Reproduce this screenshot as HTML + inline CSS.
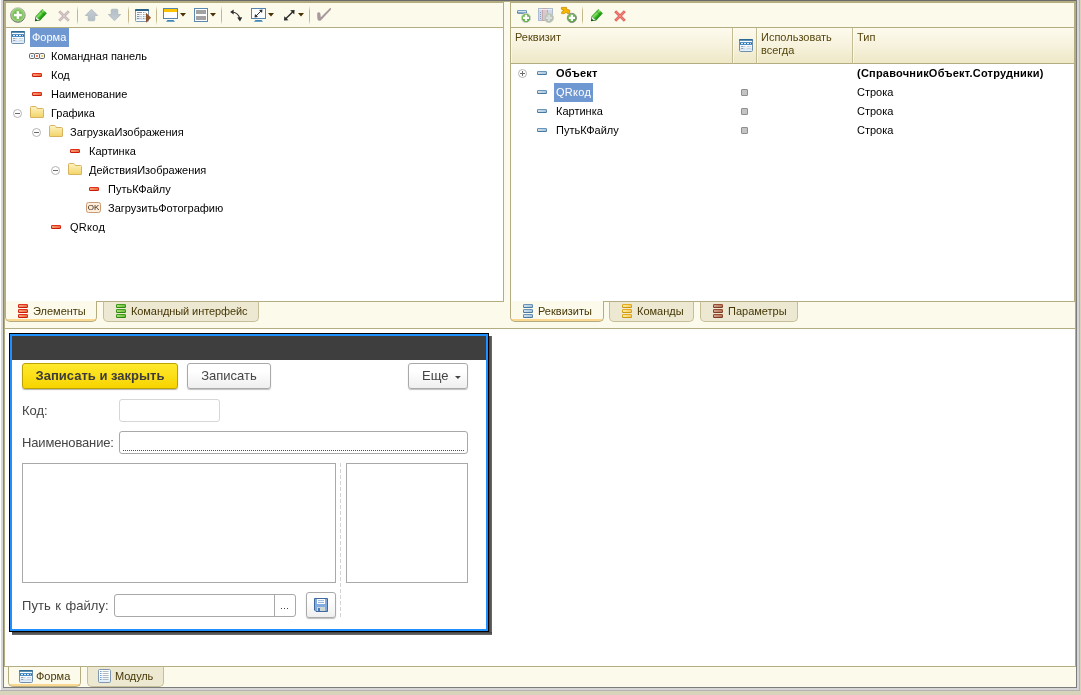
<!DOCTYPE html>
<html lang="ru">
<head>
<meta charset="utf-8">
<title>Форма</title>
<style>
html,body{margin:0;padding:0;}
body{width:1081px;height:695px;overflow:hidden;position:relative;background:#fcfaeb;font-family:"Liberation Sans",sans-serif;font-size:11px;color:#000;}
.a{position:absolute;}
svg{display:block;overflow:visible;}
.t{position:absolute;white-space:nowrap;line-height:13px;height:13px;}
.k{background:#b5ad82;}
.panel{position:absolute;background:#fff;border:1px solid #b5ad82;box-sizing:border-box;}
.sep{position:absolute;width:1px;top:6px;height:19px;background:linear-gradient(rgba(190,178,130,0),#c4b88c 25%,#c4b88c 75%,rgba(190,178,130,0));}
.tab{position:absolute;box-sizing:border-box;height:21px;border:1px solid #c6be98;border-top:1px solid #b5ad82;border-radius:0 0 5px 5px;background:#ece8d2;color:#463706;}
.tab.act{background:linear-gradient(to top,#fbd891 0,#fbd891 2px,#fcfaeb 2px);border-color:#b5ad82;border-top:none;}
.tab.act .t{top:4px;}
.tab .t{top:3px;}
.hdr{position:absolute;top:28px;height:36px;box-sizing:border-box;border-bottom:1px solid #b5ad82;border-right:1px solid #c4bc92;box-shadow:inset 1px 0 0 rgba(255,255,255,0.55);background:linear-gradient(#fdfbee 0,#f7f3df 45%,#eee8c7 100%);color:#56460e;}
.hdr .t{top:3px;left:4px;}
.sel{background:#6f97d1;}
.f{font-size:13px;color:#454545;}
.f .t{line-height:16px;height:16px;}
.btn{position:absolute;box-sizing:border-box;border:1px solid #a9a9a9;border-radius:3px;background:linear-gradient(#ffffff 30%,#efefef);box-shadow:0 1px 1px rgba(0,0,0,0.25);text-align:center;color:#454545;font-size:13px;line-height:24px;white-space:nowrap;}
.inp{position:absolute;box-sizing:border-box;border:1px solid #c8c8c8;border-radius:3px;background:#fff;}
.box{position:absolute;box-sizing:border-box;border:1px solid #a9a9a9;background:#fff;}
</style>
</head>
<body>
<div id="root" style="position:absolute;left:0;top:0;width:1081px;height:695px;will-change:transform">
<!-- outer frame -->
<div class="a" style="left:3px;top:0;width:1074px;height:1px;background:#6b6b6b"></div>
<div class="a k" style="left:4px;top:1px;width:1072px;height:2px"></div>
<div class="a" style="left:0;top:0;width:1px;height:691px;background:#fff"></div>
<div class="a" style="left:1px;top:0;width:2px;height:691px;background:#d6d6d6"></div>
<div class="a" style="left:3px;top:0;width:1px;height:688px;background:#858585"></div>
<div class="a k" style="left:4px;top:1px;width:1px;height:666px"></div>
<div class="a k" style="left:5px;top:1px;width:1px;height:316px"></div>
<div class="a k" style="left:1075px;top:1px;width:1px;height:666px"></div>
<div class="a k" style="left:1074px;top:1px;width:1px;height:301px"></div>
<div class="a" style="left:1076px;top:0;width:1px;height:688px;background:#7c7c7c"></div>
<div class="a" style="left:1077px;top:0;width:2px;height:690px;background:#d6d6d6"></div>
<div class="a" style="left:1079px;top:0;width:1px;height:691px;background:#b4b4b4"></div>
<div class="a" style="left:1080px;top:0;width:1px;height:695px;background:#d8d4bc"></div>
<div class="a" style="left:3px;top:687px;width:1074px;height:1px;background:#7c7c7c"></div>
<div class="a" style="left:1px;top:688px;width:1078px;height:2px;background:#d6d6d6"></div>
<div class="a" style="left:0;top:690px;width:1080px;height:1px;background:#b4b4b4"></div>
<div class="a" style="left:0;top:691px;width:1081px;height:4px;background:#d8d4bc"></div>

<!-- LEFT PANEL -->
<div class="panel" style="left:6px;top:27px;width:498px;height:275px;border-left:none"></div>
<div class="a k" style="left:503px;top:3px;width:1px;height:25px"></div>
<div class="a" style="left:504px;top:2px;width:6px;height:1px;background:#fcfaeb"></div>
<svg class="a" style="left:10px;top:7px" width="16" height="16" viewBox="0 0 16 16" ><defs><radialGradient id="bp1" cx="0.5" cy="0.5" r="0.5"><stop offset="0" stop-color="#56a237"/><stop offset="0.55" stop-color="#78be56"/><stop offset="1" stop-color="#b0de92"/></radialGradient><linearGradient id="bp2" x1="0" y1="0" x2="0" y2="1"><stop offset="0" stop-color="#bcbcbc"/><stop offset="1" stop-color="#5c5c5c"/></linearGradient></defs><circle cx="7.9" cy="8" r="7.3" fill="url(#bp1)" stroke="url(#bp2)" stroke-width="0.9"/><rect x="4" y="6.85" width="7.8" height="2.5" fill="#fff"/><rect x="6.65" y="4.2" width="2.5" height="7.8" fill="#fff"/></svg>
<svg class="a" style="left:34px;top:8px" width="14" height="14" viewBox="0 0 14 14" ><defs><linearGradient id="g1" x1="0.25" y1="0.25" x2="0.75" y2="0.75"><stop offset="0" stop-color="#1f8a14"/><stop offset="0.35" stop-color="#86e262"/><stop offset="0.6" stop-color="#2fb31f"/><stop offset="1" stop-color="#127a0c"/></linearGradient></defs><path d="M8.4 0.9 L12.8 5.2 L6.2 12.4 L1.7 8 Z" fill="url(#g1)"/><path d="M6.6 3.2 L10.4 6.9" stroke="#0f6a0a" stroke-width="0.9" stroke-opacity="0.55" fill="none"/><path d="M1.7 8 L6.2 12.4 L0.9 13.2 Z" fill="#0f5a0a"/><path d="M2 8.7 L5.3 11.9 L3.4 12.2 L2.1 10.9 Z" fill="#fff"/></svg>
<svg class="a" style="left:57.5px;top:9.7px" width="12" height="12" viewBox="0 0 12 12" ><path d="M1.2 1.2 L10.8 10.8 M10.8 1.2 L1.2 10.8" stroke="#c4b4b4" stroke-width="2.7" stroke-linecap="butt" fill="none"/><path d="M1.6 1.6 L10.4 10.4 M10.4 1.6 L1.6 10.4" stroke="#d6caca" stroke-width="1.2" stroke-linecap="butt" fill="none"/></svg>
<div class="sep" style="left:77px"></div>
<svg class="a" style="left:85px;top:8.9px" width="13" height="12" viewBox="0 0 13 12" ><defs><linearGradient id="g2" x1="0" y1="0" x2="0" y2="1"><stop offset="0" stop-color="#c4ccd3"/><stop offset="1" stop-color="#b4bec6"/></linearGradient></defs><path d="M6.5 0.3 L12.7 6.5 H9.8 V10.8 Q9.8 11.8 8.8 11.8 H4.2 Q3.2 11.8 3.2 10.8 V6.5 H0.3 Z" fill="url(#g2)" stroke="#a6b1ba" stroke-width="0.7"/></svg>
<svg class="a" style="left:108px;top:9px" width="13" height="12" viewBox="0 0 13 12" ><defs><linearGradient id="g3" x1="0" y1="0" x2="0" y2="1"><stop offset="0" stop-color="#c4ccd3"/><stop offset="1" stop-color="#b4bec6"/></linearGradient></defs><path d="M6.5 0.3 L12.7 6.5 H9.8 V10.8 Q9.8 11.8 8.8 11.8 H4.2 Q3.2 11.8 3.2 10.8 V6.5 H0.3 Z" fill="url(#g3)" stroke="#a6b1ba" stroke-width="0.7" transform="rotate(180 6.5 6)"/></svg>
<div class="sep" style="left:128px"></div>
<svg class="a" style="left:135px;top:9px" width="17" height="14" viewBox="0 0 17 14" ><defs><linearGradient id="g4" x1="0" y1="0" x2="0" y2="1"><stop offset="0.3" stop-color="#fff"/><stop offset="1" stop-color="#d4e4f2"/></linearGradient></defs><rect x="0.5" y="0.5" width="13" height="12" rx="1" fill="url(#g4)" stroke="#7d9ab2"/><rect x="1" y="2" width="12" height="1" fill="#fff"/><rect x="1" y="11" width="12" height="1" fill="#fff"/><path d="M0 2 V1 Q0 0 1 0 H13 Q14 0 14 1 V2 Z" fill="#2a6189"/><rect x="2" y="3" width="2" height="1" fill="#8e969e"/><rect x="4" y="3" width="3" height="1" fill="#8e969e"/><rect x="8" y="3" width="1.5" height="1" fill="#9aa2aa"/><rect x="9.5" y="3" width="1.5" height="1" fill="#ccd2d8"/><rect x="2" y="5" width="2" height="1" fill="#8e969e"/><rect x="4" y="5" width="3" height="1" fill="#c8ced4"/><rect x="8" y="5" width="1.5" height="1" fill="#9aa2aa"/><rect x="9.5" y="5" width="1.5" height="1" fill="#ccd2d8"/><rect x="2" y="7" width="2" height="1" fill="#8e969e"/><rect x="4" y="7" width="3" height="1" fill="#c8ced4"/><rect x="8" y="7" width="1.5" height="1" fill="#9aa2aa"/><rect x="9.5" y="7" width="1.5" height="1" fill="#ccd2d8"/><rect x="2" y="9" width="2" height="1" fill="#8e969e"/><rect x="4" y="9" width="3" height="1" fill="#c8ced4"/><rect x="8" y="9" width="1.5" height="1" fill="#9aa2aa"/><rect x="9.5" y="9" width="1.5" height="1" fill="#ccd2d8"/><path d="M11 3.8 L16 8.8 L11 13.8 Z" fill="#8f4f24"/></svg>
<div class="sep" style="left:156px"></div>
<svg class="a" style="left:163px;top:8px" width="15" height="14" viewBox="0 0 15 14" ><rect x="0.5" y="0.5" width="14" height="10" fill="#fff" stroke="#5484b0" stroke-width="1"/><rect x="1" y="1" width="13" height="3" fill="#ffc400"/><path d="M4.5 12 H10.5 L12 13.8 H3 Z" fill="#3f86b8"/></svg>
<svg class="a" style="left:180.2px;top:13px" width="6" height="4" viewBox="0 0 6 4" ><path d="M0 0 H6 L3 3.4 Z" fill="#4a3204"/></svg>
<svg class="a" style="left:194px;top:8px" width="14" height="14" viewBox="0 0 14 14" ><rect x="0.5" y="0.5" width="13" height="13" fill="#fff" stroke="#5a88b2" stroke-width="1"/><rect x="2" y="2" width="10" height="4" fill="#a2a2a2"/><rect x="2" y="8" width="10" height="4" fill="#a2a2a2"/></svg>
<svg class="a" style="left:210.2px;top:13px" width="6" height="4" viewBox="0 0 6 4" ><path d="M0 0 H6 L3 3.4 Z" fill="#4a3204"/></svg>
<div class="sep" style="left:221px"></div>
<svg class="a" style="left:230px;top:8.5px" width="13" height="13" viewBox="0 0 13 13" ><path d="M2 3 Q8.5 3.5 9.8 10" fill="none" stroke="#2a2a2a" stroke-width="1.2"/><path d="M0.2 3 L3.6 0.6 L3.6 5.4 Z" fill="#2a2a2a"/><path d="M7.2 8.6 L12.2 8.2 L10 12.6 Z" fill="#2a2a2a"/></svg>
<svg class="a" style="left:251px;top:8px" width="15" height="14" viewBox="0 0 15 14" ><rect x="0.5" y="0.5" width="14" height="10" fill="#fff" stroke="#5484b0" stroke-width="1"/><path d="M4.5 8.5 L10.5 2.5" stroke="#333" stroke-width="1"/><path d="M11.5 1.5 L8 2 L11 5 Z" fill="#333"/><path d="M3.5 9.5 L7 9 L4 6 Z" fill="#333"/><path d="M4.5 12 H10.5 L12 13.8 H3 Z" fill="#3f86b8"/></svg>
<svg class="a" style="left:268.2px;top:13px" width="6" height="4" viewBox="0 0 6 4" ><path d="M0 0 H6 L3 3.4 Z" fill="#4a3204"/></svg>
<svg class="a" style="left:283.7px;top:9.8px" width="10.6" height="10.6" viewBox="0 0 10.6 10.6" ><path d="M2 8.6 L8.6 2" stroke="#2a2a2a" stroke-width="1.4" fill="none"/><path d="M10.6 0 L6.148 0.3 L10.299999999999999 4.452 Z" fill="#2a2a2a"/><path d="M0 10.6 L4.452 10.299999999999999 L0.3 6.148 Z" fill="#2a2a2a"/></svg>
<svg class="a" style="left:298.2px;top:13px" width="6" height="4" viewBox="0 0 6 4" ><path d="M0 0 H6 L3 3.4 Z" fill="#4a3204"/></svg>
<div class="sep" style="left:309px"></div>
<svg class="a" style="left:316px;top:7px" width="16" height="15" viewBox="0 0 16 15" ><path d="M1.2 6.5 Q1.3 5.2 2.8 5.2 Q4.4 5.3 4.4 6.8 L4.8 10.2 L13.8 1.2 Q14.8 0.7 15.1 1.6 Q15.2 2.4 14.6 3 L4.8 13.4 Q3.6 14.2 2.4 13.4 Q1.4 12.6 1.3 11 Z" fill="#a8999d"/></svg>
<div class="a sel" style="left:30px;top:28px;width:39px;height:19px"></div>
<div class="t" style="left:32px;top:31px;color:#fff">Форма</div>
<svg class="a" style="left:11px;top:31px" width="14" height="13" viewBox="0 0 14 13" ><defs><linearGradient id="g5" x1="0" y1="0" x2="0" y2="1"><stop offset="0.45" stop-color="#fff"/><stop offset="0.85" stop-color="#d2e5f6"/><stop offset="1" stop-color="#fff"/></linearGradient></defs><rect x="0.5" y="0.5" width="13" height="12" rx="1.2" fill="url(#g5)" stroke="#6f8ea8"/><path d="M0 1.8 V1 Q0 0 1 0 H13 Q14 0 14 1 V1.8 Z" fill="#2b6a94"/><rect x="1" y="2" width="12" height="1" fill="#fff"/><rect x="1" y="3" width="12" height="1" fill="#4d94cc"/><rect x="1" y="4" width="12" height="1" fill="#336e9b"/><rect x="1" y="5" width="12" height="1" fill="#4d90c8"/><rect x="2" y="4" width="2" height="1" fill="#e4eef8"/><rect x="5" y="4" width="2" height="1" fill="#e4eef8"/><rect x="8" y="4" width="2" height="1" fill="#e4eef8"/><rect x="11" y="4" width="1" height="1" fill="#c4d8ea"/><rect x="2" y="7" width="2" height="1" fill="#9aa2aa"/><rect x="4" y="7" width="2.5" height="1" fill="#c8d0d8"/><rect x="8" y="7" width="4" height="1" fill="#ccd4dc"/><rect x="2" y="9" width="2" height="1" fill="#9aa2aa"/><rect x="4" y="9" width="1.5" height="1" fill="#c8d0d8"/><rect x="8" y="9" width="4" height="1" fill="#ccd4dc"/></svg>
<div class="t" style="left:51px;top:50px">Командная панель</div>
<svg class="a" style="left:29px;top:53px" width="16" height="6" viewBox="0 0 16 6" ><rect x="0.5" y="0.5" width="5" height="5" rx="1.3" fill="#fff" stroke="#666"/><rect x="2.1" y="2.1" width="1.8" height="1.8" fill="#7aa8dc"/><rect x="5.5" y="0.5" width="5" height="5" rx="1.3" fill="#fff" stroke="#666"/><rect x="7.1" y="2.1" width="1.8" height="1.8" fill="#ee6a48"/><rect x="10.5" y="0.5" width="5" height="5" rx="1.3" fill="#fff" stroke="#666"/><rect x="12.1" y="2.1" width="1.8" height="1.8" fill="#ecc048"/></svg>
<div class="t" style="left:51px;top:69px">Код</div>
<svg class="a" style="left:32px;top:73px" width="10" height="4" viewBox="0 0 10 4" ><defs><linearGradient id="g6" x1="0" y1="0" x2="1" y2="0"><stop offset="0" stop-color="#f89c72"/><stop offset="1" stop-color="#ea6c46"/></linearGradient><linearGradient id="g7" x1="0" y1="0" x2="0" y2="1"><stop offset="0" stop-color="#e63420"/><stop offset="1" stop-color="#c81604"/></linearGradient></defs><rect x="0" y="0" width="10" height="4" rx="1.2" fill="url(#g7)"/><rect x="1" y="1" width="8" height="2" fill="url(#g6)"/></svg>
<div class="t" style="left:51px;top:88px">Наименование</div>
<svg class="a" style="left:32px;top:92px" width="10" height="4" viewBox="0 0 10 4" ><defs><linearGradient id="g8" x1="0" y1="0" x2="1" y2="0"><stop offset="0" stop-color="#f89c72"/><stop offset="1" stop-color="#ea6c46"/></linearGradient><linearGradient id="g9" x1="0" y1="0" x2="0" y2="1"><stop offset="0" stop-color="#e63420"/><stop offset="1" stop-color="#c81604"/></linearGradient></defs><rect x="0" y="0" width="10" height="4" rx="1.2" fill="url(#g9)"/><rect x="1" y="1" width="8" height="2" fill="url(#g8)"/></svg>
<div class="t" style="left:51px;top:107px">Графика</div>
<svg class="a" style="left:30px;top:106px" width="14" height="12" viewBox="0 0 14 12" ><defs><linearGradient id="g10" x1="0" y1="0" x2="0" y2="1"><stop offset="0" stop-color="#fdf3c4"/><stop offset="1" stop-color="#f2d466"/></linearGradient></defs><path d="M0.5 11 V1.5 Q0.5 0.5 1.5 0.5 H5.5 Q6.3 0.5 6.8 1.5 L7.2 2.5 H12.5 Q13.5 2.5 13.5 3.5 V11 Q13.5 11.5 13 11.5 H1 Q0.5 11.5 0.5 11 Z" fill="url(#g10)" stroke="#d8b35f"/></svg>
<svg class="a" style="left:13px;top:109px" width="9" height="9" viewBox="0 0 9 9" ><circle cx="4.5" cy="4.5" r="4" fill="#fff" stroke="#b4b4b4"/><rect x="2" y="4" width="5" height="1" fill="#6a6a6a"/></svg>
<div class="t" style="left:70px;top:126px">ЗагрузкаИзображения</div>
<svg class="a" style="left:49px;top:125px" width="14" height="12" viewBox="0 0 14 12" ><defs><linearGradient id="g11" x1="0" y1="0" x2="0" y2="1"><stop offset="0" stop-color="#fdf3c4"/><stop offset="1" stop-color="#f2d466"/></linearGradient></defs><path d="M0.5 11 V1.5 Q0.5 0.5 1.5 0.5 H5.5 Q6.3 0.5 6.8 1.5 L7.2 2.5 H12.5 Q13.5 2.5 13.5 3.5 V11 Q13.5 11.5 13 11.5 H1 Q0.5 11.5 0.5 11 Z" fill="url(#g11)" stroke="#d8b35f"/></svg>
<svg class="a" style="left:32px;top:128px" width="9" height="9" viewBox="0 0 9 9" ><circle cx="4.5" cy="4.5" r="4" fill="#fff" stroke="#b4b4b4"/><rect x="2" y="4" width="5" height="1" fill="#6a6a6a"/></svg>
<div class="t" style="left:89px;top:145px">Картинка</div>
<svg class="a" style="left:70px;top:149px" width="10" height="4" viewBox="0 0 10 4" ><defs><linearGradient id="g12" x1="0" y1="0" x2="1" y2="0"><stop offset="0" stop-color="#f89c72"/><stop offset="1" stop-color="#ea6c46"/></linearGradient><linearGradient id="g13" x1="0" y1="0" x2="0" y2="1"><stop offset="0" stop-color="#e63420"/><stop offset="1" stop-color="#c81604"/></linearGradient></defs><rect x="0" y="0" width="10" height="4" rx="1.2" fill="url(#g13)"/><rect x="1" y="1" width="8" height="2" fill="url(#g12)"/></svg>
<div class="t" style="left:89px;top:164px">ДействияИзображения</div>
<svg class="a" style="left:68px;top:163px" width="14" height="12" viewBox="0 0 14 12" ><defs><linearGradient id="g14" x1="0" y1="0" x2="0" y2="1"><stop offset="0" stop-color="#fdf3c4"/><stop offset="1" stop-color="#f2d466"/></linearGradient></defs><path d="M0.5 11 V1.5 Q0.5 0.5 1.5 0.5 H5.5 Q6.3 0.5 6.8 1.5 L7.2 2.5 H12.5 Q13.5 2.5 13.5 3.5 V11 Q13.5 11.5 13 11.5 H1 Q0.5 11.5 0.5 11 Z" fill="url(#g14)" stroke="#d8b35f"/></svg>
<svg class="a" style="left:51px;top:166px" width="9" height="9" viewBox="0 0 9 9" ><circle cx="4.5" cy="4.5" r="4" fill="#fff" stroke="#b4b4b4"/><rect x="2" y="4" width="5" height="1" fill="#6a6a6a"/></svg>
<div class="t" style="left:108px;top:183px">ПутьКФайлу</div>
<svg class="a" style="left:89px;top:187px" width="10" height="4" viewBox="0 0 10 4" ><defs><linearGradient id="g15" x1="0" y1="0" x2="1" y2="0"><stop offset="0" stop-color="#f89c72"/><stop offset="1" stop-color="#ea6c46"/></linearGradient><linearGradient id="g16" x1="0" y1="0" x2="0" y2="1"><stop offset="0" stop-color="#e63420"/><stop offset="1" stop-color="#c81604"/></linearGradient></defs><rect x="0" y="0" width="10" height="4" rx="1.2" fill="url(#g16)"/><rect x="1" y="1" width="8" height="2" fill="url(#g15)"/></svg>
<div class="t" style="left:108px;top:202px">ЗагрузитьФотографию</div>
<svg class="a" style="left:86px;top:202px" width="15" height="11" viewBox="0 0 15 11" ><rect x="0.5" y="0.5" width="14" height="10" rx="2" fill="#fdeede" stroke="#c99a73"/><text x="7.5" y="8.3" font-family="Liberation Sans, sans-serif" font-size="8" fill="#3a2008" text-anchor="middle">OK</text></svg>
<div class="t" style="left:70px;top:221px;letter-spacing:0.3px">QRкод</div>
<svg class="a" style="left:51px;top:225px" width="10" height="4" viewBox="0 0 10 4" ><defs><linearGradient id="g17" x1="0" y1="0" x2="1" y2="0"><stop offset="0" stop-color="#f89c72"/><stop offset="1" stop-color="#ea6c46"/></linearGradient><linearGradient id="g18" x1="0" y1="0" x2="0" y2="1"><stop offset="0" stop-color="#e63420"/><stop offset="1" stop-color="#c81604"/></linearGradient></defs><rect x="0" y="0" width="10" height="4" rx="1.2" fill="url(#g18)"/><rect x="1" y="1" width="8" height="2" fill="url(#g17)"/></svg>
<div class="tab act" style="left:5px;top:301px;width:92px;border-left-color:#b5ad82"><div class="t" style="left:27px">Элементы</div></div>
<svg class="a" style="left:18px;top:304px" width="10" height="14" viewBox="0 0 10 14" ><defs><linearGradient id="g19" x1="0" y1="0" x2="1" y2="0"><stop offset="0" stop-color="#f9a47a"/><stop offset="1" stop-color="#ea6c46"/></linearGradient><linearGradient id="g20" x1="0" y1="0" x2="0" y2="1"><stop offset="0" stop-color="#e63420"/><stop offset="1" stop-color="#c81604"/></linearGradient></defs><rect x="0" y="0" width="10" height="4" rx="1.2" fill="url(#g20)"/><rect x="1" y="1" width="8" height="2" fill="url(#g19)"/><rect x="0" y="5" width="10" height="4" rx="1.2" fill="url(#g20)"/><rect x="1" y="6" width="8" height="2" fill="url(#g19)"/><rect x="0" y="10" width="10" height="4" rx="1.2" fill="url(#g20)"/><rect x="1" y="11" width="8" height="2" fill="url(#g19)"/></svg>
<div class="tab" style="left:103px;top:301px;width:156px"><div class="t" style="left:27px;letter-spacing:-0.08px">Командный интерфейс</div></div>
<svg class="a" style="left:116px;top:304px" width="10" height="14" viewBox="0 0 10 14" ><defs><linearGradient id="g21" x1="0" y1="0" x2="1" y2="0"><stop offset="0" stop-color="#a4e070"/><stop offset="1" stop-color="#6cc03c"/></linearGradient><linearGradient id="g22" x1="0" y1="0" x2="0" y2="1"><stop offset="0" stop-color="#44a020"/><stop offset="1" stop-color="#2a8010"/></linearGradient></defs><rect x="0" y="0" width="10" height="4" rx="1.2" fill="url(#g22)"/><rect x="1" y="1" width="8" height="2" fill="url(#g21)"/><rect x="0" y="5" width="10" height="4" rx="1.2" fill="url(#g22)"/><rect x="1" y="6" width="8" height="2" fill="url(#g21)"/><rect x="0" y="10" width="10" height="4" rx="1.2" fill="url(#g22)"/><rect x="1" y="11" width="8" height="2" fill="url(#g21)"/></svg>
<!-- RIGHT PANEL -->
<div class="panel" style="left:510px;top:27px;width:564px;height:275px;border-right:none"></div>
<div class="a k" style="left:510px;top:3px;width:1px;height:25px"></div>
<svg class="a" style="left:517px;top:10px" width="16" height="15" viewBox="0 0 16 15" ><defs><linearGradient id="g23" x1="0" y1="0" x2="0" y2="1"><stop offset="0" stop-color="#7fa6c6"/><stop offset="1" stop-color="#3f729c"/></linearGradient></defs><rect x="0" y="0" width="10" height="3.8" rx="1.3" fill="url(#g23)"/><rect x="1" y="1" width="8" height="1.4" fill="#d4e4f0"/><defs><radialGradient id="g24" cx="0.4" cy="0.3" r="0.8"><stop offset="0" stop-color="#7cc45a"/><stop offset="1" stop-color="#4ea632"/></radialGradient></defs><circle cx="9" cy="7.9" r="4.6" fill="url(#g24)" stroke="#cfcfcf" stroke-width="1"/><rect x="5.9" y="6.800000000000001" width="6.2" height="2.2" fill="#fff"/><rect x="7.9" y="4.800000000000001" width="2.2" height="6.2" fill="#fff"/></svg>
<svg class="a" style="left:538px;top:8px" width="17" height="16" viewBox="0 0 17 16" ><rect x="0.5" y="0.5" width="14" height="12" fill="#cfd9e8" stroke="#aebcd0"/><rect x="4.5" y="0.5" width="5" height="12" fill="#dcc8cc" stroke="#c4a8b0"/><rect x="1" y="1" width="13" height="1" fill="#e8eef6"/><rect x="2" y="4" width="1" height="1" fill="#8aa0c0"/><rect x="2" y="6" width="1" height="1" fill="#8aa0c0"/><rect x="2" y="8" width="1" height="1" fill="#8aa0c0"/><rect x="2" y="10" width="1" height="1" fill="#8aa0c0"/><defs><radialGradient id="g25" cx="0.4" cy="0.3" r="0.8"><stop offset="0" stop-color="#bccab8"/><stop offset="1" stop-color="#aebcaa"/></radialGradient></defs><circle cx="10.9" cy="9.9" r="4.6" fill="url(#g25)" stroke="#c8ccc4" stroke-width="1"/><rect x="7.800000000000001" y="8.8" width="6.2" height="2.2" fill="#dcdce0"/><rect x="9.8" y="6.800000000000001" width="2.2" height="6.2" fill="#dcdce0"/></svg>
<svg class="a" style="left:561px;top:7px" width="17" height="17" viewBox="0 0 17 17" ><path d="M0.4 0.4 H5.6 L5.2 2 L8.8 3.2 L8.6 6.4 L6.2 6.6 L5.4 4.8 L3.6 6.6 H0.6 L0.8 4.8 L3 3.2 L0.4 2.2 Z" fill="#f8b800" stroke="#c88a00" stroke-width="0.8"/><defs><radialGradient id="g26" cx="0.4" cy="0.3" r="0.8"><stop offset="0" stop-color="#7cc45a"/><stop offset="1" stop-color="#4ea632"/></radialGradient></defs><circle cx="10.9" cy="10.9" r="4.6" fill="url(#g26)" stroke="#8c8c8c" stroke-width="1"/><rect x="7.800000000000001" y="9.8" width="6.2" height="2.2" fill="#fff"/><rect x="9.8" y="7.800000000000001" width="2.2" height="6.2" fill="#fff"/></svg>
<div class="sep" style="left:582px"></div>
<svg class="a" style="left:590px;top:8.4px" width="14" height="14" viewBox="0 0 14 14" ><defs><linearGradient id="g27" x1="0.25" y1="0.25" x2="0.75" y2="0.75"><stop offset="0" stop-color="#1f8a14"/><stop offset="0.35" stop-color="#86e262"/><stop offset="0.6" stop-color="#2fb31f"/><stop offset="1" stop-color="#127a0c"/></linearGradient></defs><path d="M8.4 0.9 L12.8 5.2 L6.2 12.4 L1.7 8 Z" fill="url(#g27)"/><path d="M6.6 3.2 L10.4 6.9" stroke="#0f6a0a" stroke-width="0.9" stroke-opacity="0.55" fill="none"/><path d="M1.7 8 L6.2 12.4 L0.9 13.2 Z" fill="#0f5a0a"/><path d="M2 8.7 L5.3 11.9 L3.4 12.2 L2.1 10.9 Z" fill="#fff"/></svg>
<svg class="a" style="left:614px;top:9.8px" width="12" height="12" viewBox="0 0 12 12" ><path d="M1.2 1.2 L10.8 10.8 M10.8 1.2 L1.2 10.8" stroke="#e05a52" stroke-width="2.7" stroke-linecap="butt" fill="none"/><path d="M1.6 1.6 L10.4 10.4 M10.4 1.6 L1.6 10.4" stroke="#ee8a80" stroke-width="1.2" stroke-linecap="butt" fill="none"/></svg>
<div class="hdr" style="left:511px;width:222px"><div class="t">Реквизит</div></div>
<div class="hdr" style="left:733px;width:24px"></div>
<svg class="a" style="left:739px;top:39px" width="14" height="13" viewBox="0 0 14 13" ><defs><linearGradient id="g28" x1="0" y1="0" x2="0" y2="1"><stop offset="0.45" stop-color="#fff"/><stop offset="0.85" stop-color="#d2e5f6"/><stop offset="1" stop-color="#fff"/></linearGradient></defs><rect x="0.5" y="0.5" width="13" height="12" rx="1.2" fill="url(#g28)" stroke="#6f8ea8"/><path d="M0 1.8 V1 Q0 0 1 0 H13 Q14 0 14 1 V1.8 Z" fill="#2b6a94"/><rect x="1" y="2" width="12" height="1" fill="#fff"/><rect x="1" y="3" width="12" height="1" fill="#4d94cc"/><rect x="1" y="4" width="12" height="1" fill="#336e9b"/><rect x="1" y="5" width="12" height="1" fill="#4d90c8"/><rect x="2" y="4" width="2" height="1" fill="#e4eef8"/><rect x="5" y="4" width="2" height="1" fill="#e4eef8"/><rect x="8" y="4" width="2" height="1" fill="#e4eef8"/><rect x="11" y="4" width="1" height="1" fill="#c4d8ea"/><rect x="2" y="7" width="2" height="1" fill="#9aa2aa"/><rect x="4" y="7" width="2.5" height="1" fill="#c8d0d8"/><rect x="8" y="7" width="4" height="1" fill="#ccd4dc"/><rect x="2" y="9" width="2" height="1" fill="#9aa2aa"/><rect x="4" y="9" width="1.5" height="1" fill="#c8d0d8"/><rect x="8" y="9" width="4" height="1" fill="#ccd4dc"/></svg>
<div class="hdr" style="left:757px;width:96px"><div class="t">Использовать</div><div class="t" style="top:16px">всегда</div></div>
<div class="hdr" style="left:853px;width:221px;border-right:none"><div class="t">Тип</div></div>
<svg class="a" style="left:518px;top:69px" width="9" height="9" viewBox="0 0 9 9" ><circle cx="4.5" cy="4.5" r="4" fill="#fff" stroke="#b4b4b4"/><rect x="2" y="4" width="5" height="1" fill="#6a6a6a"/><rect x="4" y="2" width="1" height="5" fill="#6a6a6a"/></svg>
<svg class="a" style="left:537px;top:71px" width="10" height="4" viewBox="0 0 10 4" ><defs><linearGradient id="g29" x1="0" y1="0" x2="1" y2="0"><stop offset="0" stop-color="#cfe0ee"/><stop offset="1" stop-color="#a9c4da"/></linearGradient><linearGradient id="g30" x1="0" y1="0" x2="0" y2="1"><stop offset="0" stop-color="#6f9abc"/><stop offset="1" stop-color="#41739c"/></linearGradient></defs><rect x="0" y="0" width="10" height="4" rx="1.2" fill="url(#g30)"/><rect x="1" y="1" width="8" height="2" fill="url(#g29)"/></svg>
<div class="t" style="left:556px;top:67px;font-weight:bold;letter-spacing:0.22px">Объект</div>
<div class="t" style="left:857px;top:67px;font-weight:bold;letter-spacing:0.22px">(СправочникОбъект.Сотрудники)</div>
<svg class="a" style="left:537px;top:90px" width="10" height="4" viewBox="0 0 10 4" ><defs><linearGradient id="g31" x1="0" y1="0" x2="1" y2="0"><stop offset="0" stop-color="#cfe0ee"/><stop offset="1" stop-color="#a9c4da"/></linearGradient><linearGradient id="g32" x1="0" y1="0" x2="0" y2="1"><stop offset="0" stop-color="#6f9abc"/><stop offset="1" stop-color="#41739c"/></linearGradient></defs><rect x="0" y="0" width="10" height="4" rx="1.2" fill="url(#g32)"/><rect x="1" y="1" width="8" height="2" fill="url(#g31)"/></svg>
<div class="a sel" style="left:554px;top:83px;width:39px;height:19px"></div>
<div class="t" style="left:556px;top:86px;color:#fff;letter-spacing:0.3px">QRкод</div>
<div class="t" style="left:857px;top:86px">Строка</div>
<div class="a" style="left:741px;top:89px;width:7px;height:7px;box-sizing:border-box;border:1px solid #8f8f8f;border-radius:1px;background:#c4c4c4"></div>
<svg class="a" style="left:537px;top:109px" width="10" height="4" viewBox="0 0 10 4" ><defs><linearGradient id="g33" x1="0" y1="0" x2="1" y2="0"><stop offset="0" stop-color="#cfe0ee"/><stop offset="1" stop-color="#a9c4da"/></linearGradient><linearGradient id="g34" x1="0" y1="0" x2="0" y2="1"><stop offset="0" stop-color="#6f9abc"/><stop offset="1" stop-color="#41739c"/></linearGradient></defs><rect x="0" y="0" width="10" height="4" rx="1.2" fill="url(#g34)"/><rect x="1" y="1" width="8" height="2" fill="url(#g33)"/></svg>
<div class="t" style="left:556px;top:105px">Картинка</div>
<div class="t" style="left:857px;top:105px">Строка</div>
<div class="a" style="left:741px;top:108px;width:7px;height:7px;box-sizing:border-box;border:1px solid #8f8f8f;border-radius:1px;background:#c4c4c4"></div>
<svg class="a" style="left:537px;top:128px" width="10" height="4" viewBox="0 0 10 4" ><defs><linearGradient id="g35" x1="0" y1="0" x2="1" y2="0"><stop offset="0" stop-color="#cfe0ee"/><stop offset="1" stop-color="#a9c4da"/></linearGradient><linearGradient id="g36" x1="0" y1="0" x2="0" y2="1"><stop offset="0" stop-color="#6f9abc"/><stop offset="1" stop-color="#41739c"/></linearGradient></defs><rect x="0" y="0" width="10" height="4" rx="1.2" fill="url(#g36)"/><rect x="1" y="1" width="8" height="2" fill="url(#g35)"/></svg>
<div class="t" style="left:556px;top:124px">ПутьКФайлу</div>
<div class="t" style="left:857px;top:124px">Строка</div>
<div class="a" style="left:741px;top:127px;width:7px;height:7px;box-sizing:border-box;border:1px solid #8f8f8f;border-radius:1px;background:#c4c4c4"></div>
<div class="tab act" style="left:510px;top:301px;width:94px;border-left-color:#b5ad82"><div class="t" style="left:27px">Реквизиты</div></div>
<svg class="a" style="left:523px;top:304px" width="10" height="14" viewBox="0 0 10 14" ><defs><linearGradient id="g37" x1="0" y1="0" x2="1" y2="0"><stop offset="0" stop-color="#cfe0ee"/><stop offset="1" stop-color="#a9c4da"/></linearGradient><linearGradient id="g38" x1="0" y1="0" x2="0" y2="1"><stop offset="0" stop-color="#6f9abc"/><stop offset="1" stop-color="#41739c"/></linearGradient></defs><rect x="0" y="0" width="10" height="4" rx="1.2" fill="url(#g38)"/><rect x="1" y="1" width="8" height="2" fill="url(#g37)"/><rect x="0" y="5" width="10" height="4" rx="1.2" fill="url(#g38)"/><rect x="1" y="6" width="8" height="2" fill="url(#g37)"/><rect x="0" y="10" width="10" height="4" rx="1.2" fill="url(#g38)"/><rect x="1" y="11" width="8" height="2" fill="url(#g37)"/></svg>
<div class="tab" style="left:609px;top:301px;width:85px"><div class="t" style="left:27px">Команды</div></div>
<svg class="a" style="left:622px;top:304px" width="10" height="14" viewBox="0 0 10 14" ><defs><linearGradient id="g39" x1="0" y1="0" x2="1" y2="0"><stop offset="0" stop-color="#fdeaa0"/><stop offset="1" stop-color="#f6cc58"/></linearGradient><linearGradient id="g40" x1="0" y1="0" x2="0" y2="1"><stop offset="0" stop-color="#e8b020"/><stop offset="1" stop-color="#c8940c"/></linearGradient></defs><rect x="0" y="0" width="10" height="4" rx="1.2" fill="url(#g40)"/><rect x="1" y="1" width="8" height="2" fill="url(#g39)"/><rect x="0" y="5" width="10" height="4" rx="1.2" fill="url(#g40)"/><rect x="1" y="6" width="8" height="2" fill="url(#g39)"/><rect x="0" y="10" width="10" height="4" rx="1.2" fill="url(#g40)"/><rect x="1" y="11" width="8" height="2" fill="url(#g39)"/></svg>
<div class="tab" style="left:700px;top:301px;width:98px"><div class="t" style="left:27px">Параметры</div></div>
<svg class="a" style="left:713px;top:304px" width="10" height="14" viewBox="0 0 10 14" ><defs><linearGradient id="g41" x1="0" y1="0" x2="1" y2="0"><stop offset="0" stop-color="#d4a088"/><stop offset="1" stop-color="#b4745a"/></linearGradient><linearGradient id="g42" x1="0" y1="0" x2="0" y2="1"><stop offset="0" stop-color="#9a5036"/><stop offset="1" stop-color="#783a24"/></linearGradient></defs><rect x="0" y="0" width="10" height="4" rx="1.2" fill="url(#g42)"/><rect x="1" y="1" width="8" height="2" fill="url(#g41)"/><rect x="0" y="5" width="10" height="4" rx="1.2" fill="url(#g42)"/><rect x="1" y="6" width="8" height="2" fill="url(#g41)"/><rect x="0" y="10" width="10" height="4" rx="1.2" fill="url(#g42)"/><rect x="1" y="11" width="8" height="2" fill="url(#g41)"/></svg>
<!-- BOTTOM PANEL -->
<div class="a" style="left:5px;top:329px;width:1070px;height:337px;background:#fff"></div>
<div class="a k" style="left:5px;top:328px;width:1070px;height:1px"></div>
<div class="a k" style="left:4px;top:666px;width:1072px;height:1px"></div>
<div class="a" style="left:489px;top:336px;width:3px;height:299px;background:linear-gradient(90deg,#404040,#6e6e6e)"></div>
<div class="a" style="left:12px;top:632px;width:480px;height:3px;background:linear-gradient(180deg,#404040,#6e6e6e)"></div>
<div class="a f" style="left:9px;top:333px;width:480px;height:299px;box-sizing:border-box;border:1px solid #000;background:#1e90ff">
<div class="a" style="left:2px;top:2px;width:474px;height:293px;background:#fff"></div>
<div class="a" style="left:2px;top:2px;width:474px;height:24px;background:#3e3e3e"></div>
<div class="btn" style="left:12px;top:29px;width:156px;height:26px;font-weight:bold;color:#3c3c3c;border-color:#bca200;background:linear-gradient(#ffe92e,#f7d400);box-shadow:0 1px 1px rgba(0,0,0,0.3)">Записать и закрыть</div>
<div class="btn" style="left:177px;top:29px;width:84px;height:26px">Записать</div>
<div class="btn" style="left:398px;top:29px;width:60px;height:26px;text-align:left;padding-left:13px">Еще</div>
<svg class="a" style="left:445px;top:42px" width="6" height="3" viewBox="0 0 6 3" ><path d="M0 0 H5.8 L2.9 3 Z" fill="#444"/></svg>
<div class="t" style="left:12px;top:69px">Код:</div>
<div class="inp" style="left:109px;top:65px;width:101px;height:23px;border-color:#d6d6d6"></div>
<div class="t" style="left:12px;top:101px;letter-spacing:-0.15px">Наименование:</div>
<div class="inp" style="left:109px;top:97px;width:349px;height:23px;border-color:#a8a8a8"></div>
<div class="a" style="left:113px;top:116px;width:342px;height:1px;background:repeating-linear-gradient(90deg,#ff0000 0 1px,#fff 1px 2px)"></div>
<div class="box" style="left:12px;top:129px;width:314px;height:120px"></div>
<div class="box" style="left:336px;top:129px;width:122px;height:120px"></div>
<div class="a" style="left:330px;top:129px;width:1px;height:155px;background:repeating-linear-gradient(180deg,#d4d4d4 0 4px,#fff 4px 6px)"></div>
<div class="t" style="left:12px;top:264px;word-spacing:0.8px;letter-spacing:0.06px">Путь к файлу:</div>
<div class="inp" style="left:104px;top:260px;width:182px;height:23px;border-color:#a8a8a8"></div>
<div class="a" style="left:264px;top:261px;width:1px;height:21px;background:#a8a8a8"></div>
<div class="a" style="left:271px;top:274px;width:1px;height:1px;background:#444"></div><div class="a" style="left:274px;top:274px;width:1px;height:1px;background:#444"></div><div class="a" style="left:277px;top:274px;width:1px;height:1px;background:#444"></div>
<div class="btn" style="left:296px;top:258px;width:30px;height:26px"></div>
<svg class="a" style="left:304px;top:264px" width="14" height="14" viewBox="0 0 14 14" ><path d="M0.5 0.5 H13.5 V13.5 H2 L0.5 12 Z" fill="#82ace0" stroke="#3f689f"/><rect x="3" y="1" width="8" height="5" fill="#fff"/><rect x="4" y="2.2" width="6" height="0.9" fill="#8ab0e0"/><rect x="4" y="4" width="6" height="0.9" fill="#8ab0e0"/><rect x="3" y="9" width="8" height="4" fill="#cfd6d6"/><rect x="4" y="10" width="2" height="3" fill="#4a78b8"/></svg>
</div>
<div class="tab act" style="left:8px;top:667px;width:73px;height:20px"><div class="t" style="left:27px;top:3px">Форма</div></div>
<svg class="a" style="left:19px;top:670px" width="14" height="13" viewBox="0 0 14 13" ><defs><linearGradient id="g43" x1="0" y1="0" x2="0" y2="1"><stop offset="0.45" stop-color="#fff"/><stop offset="0.85" stop-color="#d2e5f6"/><stop offset="1" stop-color="#fff"/></linearGradient></defs><rect x="0.5" y="0.5" width="13" height="12" rx="1.2" fill="url(#g43)" stroke="#6f8ea8"/><path d="M0 1.8 V1 Q0 0 1 0 H13 Q14 0 14 1 V1.8 Z" fill="#2b6a94"/><rect x="1" y="2" width="12" height="1" fill="#fff"/><rect x="1" y="3" width="12" height="1" fill="#4d94cc"/><rect x="1" y="4" width="12" height="1" fill="#336e9b"/><rect x="1" y="5" width="12" height="1" fill="#4d90c8"/><rect x="2" y="4" width="2" height="1" fill="#e4eef8"/><rect x="5" y="4" width="2" height="1" fill="#e4eef8"/><rect x="8" y="4" width="2" height="1" fill="#e4eef8"/><rect x="11" y="4" width="1" height="1" fill="#c4d8ea"/><rect x="2" y="7" width="2" height="1" fill="#9aa2aa"/><rect x="4" y="7" width="2.5" height="1" fill="#c8d0d8"/><rect x="8" y="7" width="4" height="1" fill="#ccd4dc"/><rect x="2" y="9" width="2" height="1" fill="#9aa2aa"/><rect x="4" y="9" width="1.5" height="1" fill="#c8d0d8"/><rect x="8" y="9" width="4" height="1" fill="#ccd4dc"/></svg>
<div class="tab" style="left:87px;top:666px;width:77px;height:21px"><div class="t" style="left:27px;letter-spacing:-0.15px">Модуль</div></div>
<svg class="a" style="left:98px;top:669px" width="13" height="14" viewBox="0 0 13 14" ><defs><linearGradient id="g44" x1="0" y1="0" x2="0" y2="1"><stop offset="0.4" stop-color="#fff"/><stop offset="1" stop-color="#dcebf8"/></linearGradient></defs><rect x="0.5" y="0.5" width="12" height="13" rx="1.2" fill="url(#g44)" stroke="#7f98ad"/><rect x="2" y="2" width="1.6" height="1" fill="#6f9fca"/><rect x="4.6" y="2" width="6" height="1" fill="#b2bac2"/><rect x="2" y="4" width="1.6" height="1" fill="#6f9fca"/><rect x="4.6" y="4" width="6" height="1" fill="#b2bac2"/><rect x="2" y="6" width="1.6" height="1" fill="#6f9fca"/><rect x="4.6" y="6" width="6" height="1" fill="#b2bac2"/><rect x="2" y="8" width="1.6" height="1" fill="#6f9fca"/><rect x="4.6" y="8" width="6" height="1" fill="#b2bac2"/><rect x="2" y="10" width="1.6" height="1" fill="#6f9fca"/><rect x="4.6" y="10" width="6" height="1" fill="#b2bac2"/></svg>
</div>
</body>
</html>
